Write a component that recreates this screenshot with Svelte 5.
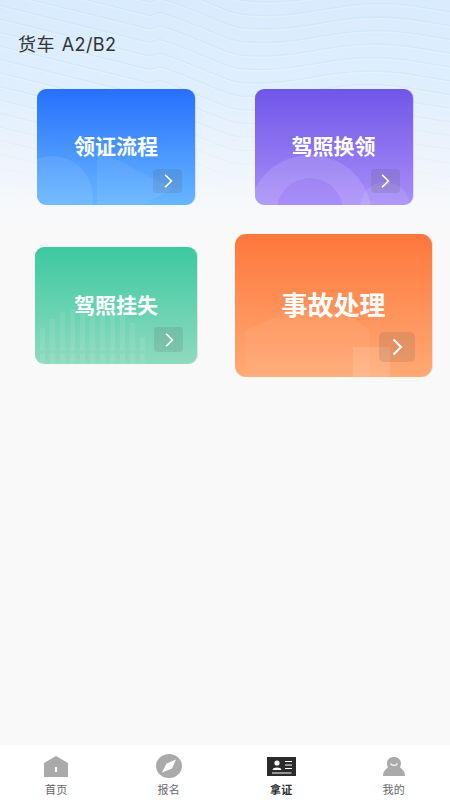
<script>
  const tabs = [
    { label: '首页', icon: 'home' },
    { label: '报名', icon: 'compass' },
    { label: '拿证', icon: 'id', active: true },
    { label: '我的', icon: 'user' }
  ]

  // bar tops for the green card
  const bars = [81, 72, 65, 62, 60, 62, 66, 66, 68, 76, 90]

  // wavy lines behind the header: they slope down on the left, then roll on the right
  const waves = []
  for (let i = 0; i < 22; i++) {
    let d = ''
    for (let x = -10; x <= 460; x += 10) {
      const slope = 58 * Math.min(Math.max(x, 0), 235) / 235
      const roll = x > 150 ? 6 * Math.sin(x / 36 + 0.4 + i * 0.05) : 0
      const y = i * 13.5 - 62 + slope + roll
      d += (d ? 'L' : 'M') + x + ' ' + y.toFixed(1)
    }
    waves.push(d)
  }
</script>

<div class="page">
  <svg class="waves" viewBox="0 0 450 230" width="450" height="230" aria-hidden="true">
    {#each waves as d}
      <path {d} fill="none" stroke="#bcdcf8" stroke-opacity="0.28" stroke-width="1.2" />
      <path {d} transform="translate(0 1.5)" fill="none" stroke="#fff" stroke-opacity="0.25" stroke-width="1" />
    {/each}
  </svg>

  <main class="content">
    <h1 class="title">货车 A2/B2</h1>

    <div class="grid">
      <div class="card blue">
        <svg class="deco" viewBox="0 0 158 116" aria-hidden="true">
          <circle cx="15" cy="108" r="41" fill="#fff" opacity="0.09" />
          <path d="M60 60L136 100L105 116H60Z" fill="#fff" opacity="0.07" />
        </svg>
        <span class="name">领证流程</span>
        <span class="go"><svg viewBox="0 0 24 24"><path d="M8.500 4.500L16 12L8.500 19.500" /></svg></span>
      </div>

      <div class="card purple">
        <svg class="deco" viewBox="0 0 158 116" aria-hidden="true">
          <circle cx="55" cy="128" r="62" fill="#fff" opacity="0.13" />
          <circle cx="55" cy="122" r="33" fill="#7a5cf0" opacity="0.2" />
          <circle cx="130" cy="118" r="25" fill="#fff" opacity="0.1" />
        </svg>
        <span class="name">驾照换领</span>
        <span class="go"><svg viewBox="0 0 24 24"><path d="M8.500 4.500L16 12L8.500 19.500" /></svg></span>
      </div>

      <div class="card green">
        <svg class="deco" viewBox="0 0 162 117" aria-hidden="true">
          {#each bars as top, i}
            <rect x={5 + i * 10} y={top} width="5" height={104 - top} fill="#fff" opacity="0.08" />
            <rect x={5 + i * 10} y="106" width="5" height="11" fill="#fff" opacity="0.08" />
          {/each}
        </svg>
        <span class="name">驾照挂失</span>
        <span class="go"><svg viewBox="0 0 24 24"><path d="M8.500 4.500L16 12L8.500 19.500" /></svg></span>
      </div>

      <div class="card orange">
        <svg class="deco" viewBox="0 0 197 143" aria-hidden="true">
          <path d="M10 96L52 78H108L135 96V143H10Z" fill="#fff" opacity="0.06" />
          <rect x="118" y="113" width="37" height="30" fill="#fff" opacity="0.13" />
        </svg>
        <span class="name">事故处理</span>
        <span class="go"><svg viewBox="0 0 24 24"><path d="M8.500 4.500L16 12L8.500 19.500" /></svg></span>
      </div>
    </div>
  </main>

  <nav class="tabbar">
    {#each tabs as tab}
      <div class="tab" class:active={tab.active}>
        <span class="tab-icon">
          {#if tab.icon === 'home'}
            <svg width="24" height="21" viewBox="0 0 24 21">
              <path d="M12 0L24 7V21H0V7Z" fill="#aaa" />
              <rect x="11" y="11" width="2" height="5" fill="#fff" />
            </svg>
          {:else if tab.icon === 'compass'}
            <svg width="26" height="24" viewBox="0 0 26 24">
              <ellipse cx="13" cy="12" rx="13" ry="12" fill="#aaa" />
              <path d="M20 5.500L16 14.500L6 18.500L10.500 9.500Z" fill="#fff" />
            </svg>
          {:else if tab.icon === 'id'}
            <svg width="29" height="19" viewBox="0 0 29 19">
              <rect width="29" height="19" fill="#2b2b2b" />
              <circle cx="10" cy="6" r="2.600" fill="#fff" />
              <path d="M5.500 13C6 9.800 14 9.800 14.500 13Z" fill="#fff" />
              <path d="M18 4.500H25M18 8H25M18 11.500H25M5 16H24.500" stroke="#fff" stroke-width="1.200" />
            </svg>
          {:else}
            <svg width="22" height="19" viewBox="0 0 22 19">
              <path d="M0 19C0 14 3 12 5 10.500C4.300 9 4 7.500 4 6.500C4 2.500 7 0 11 0C15 0 18 2.500 18 6.500C18 7.500 17.700 9 17 10.500C19 12 22 14 22 19Z" fill="#aaa" />
              <path d="M7.500 6.500C9 9 13 9 14.500 6.500" fill="none" stroke="#fff" stroke-width="1.300" />
            </svg>
          {/if}
        </span>
        <span class="tab-label">{tab.label}</span>
      </div>
    {/each}
  </nav>
</div>

<style>
  :global(body) {
    margin: 0;
    background: #f9f9f9;
  }

  .page {
    position: relative;
    display: flex;
    flex-direction: column;
    width: 450px;
    height: 800px;
    overflow: hidden;
    background: linear-gradient(180deg, #d8ebfd 0, #e1effd 100px, #f9f9fa 215px);
    font-family: "Liberation Sans", "Noto Sans CJK SC", sans-serif;
  }

  .waves {
    position: absolute;
    top: 0;
    left: 0;
    filter: blur(0.6px);
    mask-image: linear-gradient(180deg, #000 90px, transparent 205px);
  }

  .content {
    position: relative;
    flex: 1;
  }

  .title {
    margin: 0;
    padding: 34px 0 0 18px;
    height: 21px;
    font-family: Inter, "Noto Sans CJK SC", sans-serif;
    font-size: 18px;
    line-height: 21px;
    font-weight: 400;
    letter-spacing: 0.4px;
    word-spacing: 1.5px;
    color: #333;
  }

  .grid {
    display: grid;
    grid-template-columns: 218px 217px;
    justify-items: center;
    align-items: center;
    row-gap: 29px;
    margin-top: 34px;
    padding-left: 7px;
  }

  .card {
    position: relative;
    display: flex;
    justify-content: center;
    overflow: hidden;
    width: 158px;
    height: 116px;
    border-radius: 9px;
    box-shadow: 1px 0 1px rgba(0, 0, 0, 0.1);
  }

  .deco {
    position: absolute;
    inset: 0;
    width: 100%;
    height: 100%;
  }

  .blue {
    background: linear-gradient(180deg, #2770ff, #66b6ff);
  }

  .purple {
    background: linear-gradient(180deg, #7056e8, #a78ef8);
  }

  .green {
    width: 162px;
    height: 117px;
    background: linear-gradient(180deg, #3cc9a0, #8fdabf);
  }

  .orange {
    width: 197px;
    height: 143px;
    border-radius: 11px;
    background: linear-gradient(180deg, #ff773c, #ffa973);
  }

  .name {
    position: relative;
    margin-top: 45px;
    font-size: 21px;
    line-height: 26px;
    font-weight: 700;
    color: #fff;
  }

  .green .name {
    margin-top: 46px;
  }

  .orange .name {
    margin-top: 56px;
    font-size: 26px;
    line-height: 32px;
  }

  .go {
    position: absolute;
    right: 13px;
    bottom: 12px;
    display: flex;
    align-items: center;
    justify-content: center;
    width: 29px;
    height: 24px;
    border-radius: 4px;
    background: rgba(90, 90, 90, 0.16);
  }

  .green .go {
    right: 14px;
    width: 29px;
    height: 25px;
  }

  .orange .go {
    right: 17px;
    bottom: 15px;
    width: 36px;
    height: 30px;
    border-radius: 5px;
  }

  .go svg {
    width: 20px;
    height: 20px;
  }

  .orange .go svg {
    width: 24px;
    height: 24px;
  }

  .go path {
    fill: none;
    stroke: #fff;
    stroke-width: 2;
  }

  .tabbar {
    position: relative;
    display: grid;
    grid-template-columns: repeat(4, 1fr);
    height: 55px;
    background: #fff;
  }

  .tab {
    display: flex;
    flex-direction: column;
    align-items: center;
  }

  .tab-icon {
    display: flex;
    align-items: center;
    justify-content: center;
    height: 26px;
    margin-top: 8px;
  }

  .tab-label {
    margin-top: 4px;
    font-size: 11px;
    line-height: 14px;
    letter-spacing: 0.3px;
    color: #666;
  }

  .active .tab-label {
    font-weight: 700;
    color: #2b2b2b;
  }
</style>
